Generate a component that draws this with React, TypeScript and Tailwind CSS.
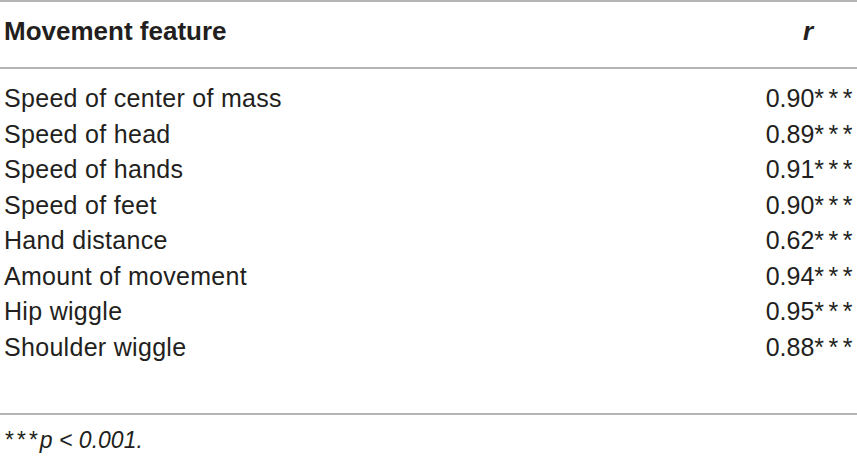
import React from "react";

const rows: [string, string][] = [
  ["Speed of center of mass", "0.90"],
  ["Speed of head", "0.89"],
  ["Speed of hands", "0.91"],
  ["Speed of feet", "0.90"],
  ["Hand distance", "0.62"],
  ["Amount of movement", "0.94"],
  ["Hip wiggle", "0.95"],
  ["Shoulder wiggle", "0.88"],
];

export default function App() {
  return (
    <div
      className="w-[857px] h-[463px] bg-white text-[#231f20]"
      style={{ fontFamily: '"Liberation Sans", Arial, sans-serif' }}
    >
      <div className="h-[2px] bg-[#b5b5b5]" />
      <div className="h-[65px] flex items-center pb-[6px] pl-[4px] text-[26px] font-bold">
        <div className="flex-1">Movement feature</div>
        <div className="w-[60px] text-right pr-[44px] italic">r</div>
      </div>
      <div className="h-[2px] bg-[#b5b5b5]" />
      <div className="pt-[12px] pb-[47.5px] text-[25px] tracking-[0.3px]">
        {rows.map(([label, v]) => (
          <div key={label} className="h-[35.5px] leading-[35.5px] flex pl-[4px]">
            <div className="flex-1">{label}</div>
            <div className="text-right tracking-normal">
              {v}
              <span className="tracking-[4.5px]">***</span>
            </div>
          </div>
        ))}
      </div>
      <div className="h-[2px] bg-[#b5b5b5]" />
      <div className="pt-[10px] pl-[4px] leading-[30px] text-[23px] italic">
        <span className="tracking-[3px]">***</span>p &lt; 0.001.
      </div>
    </div>
  );
}
